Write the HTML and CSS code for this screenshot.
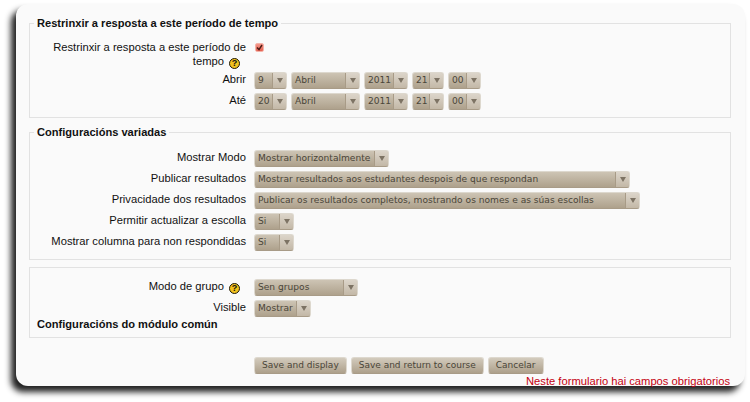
FILE: index.html
```html
<!DOCTYPE html>
<html lang="gl">

<head>
    <meta charset="UTF-8">
    <title>Configuracións</title>
    <link rel="stylesheet" href="styles.css">
</head>

<body>
    <form class="panel">
        <fieldset class="group group-time">
            <legend>Restrinxir a resposta a este período de tempo</legend>
            <div class="row row-top">
                <div class="label">Restrinxir a resposta a este período de tempo <span class="help">?</span></div>
                <span class="check">
                    <svg width="7" height="7" viewBox="0 0 7 7"><path d="M1 3.5 L3 5.6 L6 1" fill="none" stroke="#4a1a14" stroke-width="1.4"/></svg>
                </span>
            </div>
            <div class="row">
                <div class="label">Abrir</div>
                <div class="dates">
                    <div class="select w-day"><span class="value">9</span><span class="arrow"></span></div>
                    <div class="select w-month"><span class="value">Abril</span><span class="arrow"></span></div>
                    <div class="select w-year"><span class="value">2011</span><span class="arrow"></span></div>
                    <div class="select w-hour"><span class="value">21</span><span class="arrow"></span></div>
                    <div class="select w-min"><span class="value">00</span><span class="arrow"></span></div>
                </div>
            </div>
            <div class="row">
                <div class="label">Até</div>
                <div class="dates">
                    <div class="select w-day"><span class="value">20</span><span class="arrow"></span></div>
                    <div class="select w-month"><span class="value">Abril</span><span class="arrow"></span></div>
                    <div class="select w-year"><span class="value">2011</span><span class="arrow"></span></div>
                    <div class="select w-hour"><span class="value">21</span><span class="arrow"></span></div>
                    <div class="select w-min"><span class="value">00</span><span class="arrow"></span></div>
                </div>
            </div>
        </fieldset>

        <fieldset class="group group-misc">
            <legend>Configuracións variadas</legend>
            <div class="row">
                <div class="label">Mostrar Modo</div>
                <div class="select w-mode"><span class="value">Mostrar horizontalmente</span><span class="arrow"></span></div>
            </div>
            <div class="row">
                <div class="label">Publicar resultados</div>
                <div class="select w-publish"><span class="value">Mostrar resultados aos estudantes despois de que respondan</span><span class="arrow"></span></div>
            </div>
            <div class="row">
                <div class="label">Privacidade dos resultados</div>
                <div class="select w-privacy"><span class="value">Publicar os resultados completos, mostrando os nomes e as súas escollas</span><span class="arrow"></span></div>
            </div>
            <div class="row">
                <div class="label">Permitir actualizar a escolla</div>
                <div class="select w-yes"><span class="value">Si</span><span class="arrow"></span></div>
            </div>
            <div class="row">
                <div class="label">Mostrar columna para non respondidas</div>
                <div class="select w-yes"><span class="value">Si</span><span class="arrow"></span></div>
            </div>
        </fieldset>

        <fieldset class="group group-plain">
            <div class="row">
                <div class="label">Modo de grupo <span class="help">?</span></div>
                <div class="select w-group"><span class="value">Sen grupos</span><span class="arrow"></span></div>
            </div>
            <div class="row">
                <div class="label">Visible</div>
                <div class="select w-visible"><span class="value">Mostrar</span><span class="arrow"></span></div>
            </div>
            <div class="common">Configuracións do módulo común</div>
        </fieldset>

        <div class="buttons">
            <button type="button" class="button">Save and display</button>
            <button type="button" class="button">Save and return to course</button>
            <button type="button" class="button">Cancelar</button>
        </div>
        <div class="required">Neste formulario hai campos obrigatorios</div>
    </form>
</body>

</html>
```

FILE: styles.css
```css
html, body {
    margin: 0;
    background-color: #ffffff;
}

body {
    width: 750px;
    height: 402px;
    overflow: hidden;
    font-family: "Liberation Sans", Arial, sans-serif;
    font-size: 11.2px;
    color: #111111;
}

.panel {
    box-sizing: border-box;
    display: flex;
    flex-direction: column;
    gap: 7px;
    width: 729px;
    height: 382px;
    margin: 4px 0 0 16px;
    padding: 12px 14px 0 13px;
    background-color: #fafafa;
    border-radius: 12px;
    box-shadow: -5px 6px 6px #222222;
}

.group {
    margin: 0;
    padding: 11px 4px 7px;
    border: 1px solid #e2e2e2;
    min-width: 0;
}

.group-time {
    padding-top: 10px;
}

.group-misc {
    padding-bottom: 8px;
}

.group-plain {
    padding-bottom: 6px;
}

legend {
    padding: 0 3px;
    font-size: 11.1px;
    font-weight: bold;
    line-height: 14px;
}

.row {
    display: flex;
    align-items: flex-start;
    gap: 8px;
    margin-bottom: 4px;
}

.row:last-child {
    margin-bottom: 0;
}

.group-plain .row:nth-child(2) {
    margin-bottom: 0;
}

.label {
    width: 212px;
    flex: none;
    text-align: right;
    line-height: 14px;
}

.help {
    display: inline-block;
    box-sizing: border-box;
    width: 11px;
    height: 11px;
    margin: -3px 6px -1px 2px;
    border: 1px solid #1d1808;
    border-radius: 50%;
    background-color: #f2c21d;
    font-size: 9px;
    font-weight: bold;
    line-height: 9px;
    text-align: center;
    vertical-align: -1px;
}

.check {
    display: flex;
    align-items: center;
    justify-content: center;
    box-sizing: border-box;
    width: 9px;
    height: 9px;
    margin-top: 3px;
    margin-left: 1px;
    border: 1px solid #f4b3a9;
    border-radius: 2px;
    background: linear-gradient(#f4968a, #e4604f);
}

.check svg {
    flex: none;
}

.dates {
    display: flex;
    gap: 4px;
}

.select {
    box-sizing: border-box;
    display: flex;
    flex: none;
    height: 17px;
    overflow: hidden;
    border: 1px solid #ddd8ce;
    border-bottom-color: #a89b87;
    border-radius: 3px;
    background: linear-gradient(#cdc4b4, #aea18c);
    color: #4a4538;
    font-family: "DejaVu Sans", Verdana, sans-serif;
    font-size: 9.1px;
    line-height: 15px;
}

.value {
    flex: 1;
    min-width: 0;
    padding-left: 3px;
    overflow: hidden;
    white-space: nowrap;
}

.arrow {
    display: flex;
    align-items: center;
    justify-content: center;
    flex: none;
    width: 13px;
    border-left: 1px solid #a89b87;
    background: linear-gradient(#dcd5ca, #c3b8a7);
}

.arrow::after {
    content: "";
    width: 0;
    height: 0;
    border-left: 3px solid transparent;
    border-right: 3px solid transparent;
    border-top: 5px solid #7d7364;
}

.w-day { width: 33px; }
.w-month { width: 69px; }
.w-year { width: 44px; }
.w-hour { width: 32px; }
.w-min { width: 33px; }
.w-mode { width: 135px; }
.w-publish { width: 376px; }
.w-privacy { width: 386px; }
.w-yes { width: 40px; }
.w-group { width: 104px; }
.w-visible { width: 57px; }

.common {
    padding-left: 3px;
    font-size: 11.1px;
    font-weight: bold;
    line-height: 14px;
}

.buttons {
    display: flex;
    gap: 4px;
    margin-top: 12px;
    margin-left: 225px;
}

.button {
    box-sizing: border-box;
    height: 17px;
    padding: 0 7px;
    border: 1px solid #ddd8ce;
    border-bottom-color: #a89b87;
    border-radius: 3px;
    background: linear-gradient(#d3cbbd, #ada08b);
    color: #4a4538;
    font-family: "DejaVu Sans", Verdana, sans-serif;
    font-size: 9px;
    line-height: 13px;
    cursor: pointer;
}

.required {
    margin-top: -7px;
    padding-right: 1px;
    color: #c40010;
    text-align: right;
    line-height: 14px;
}
```
